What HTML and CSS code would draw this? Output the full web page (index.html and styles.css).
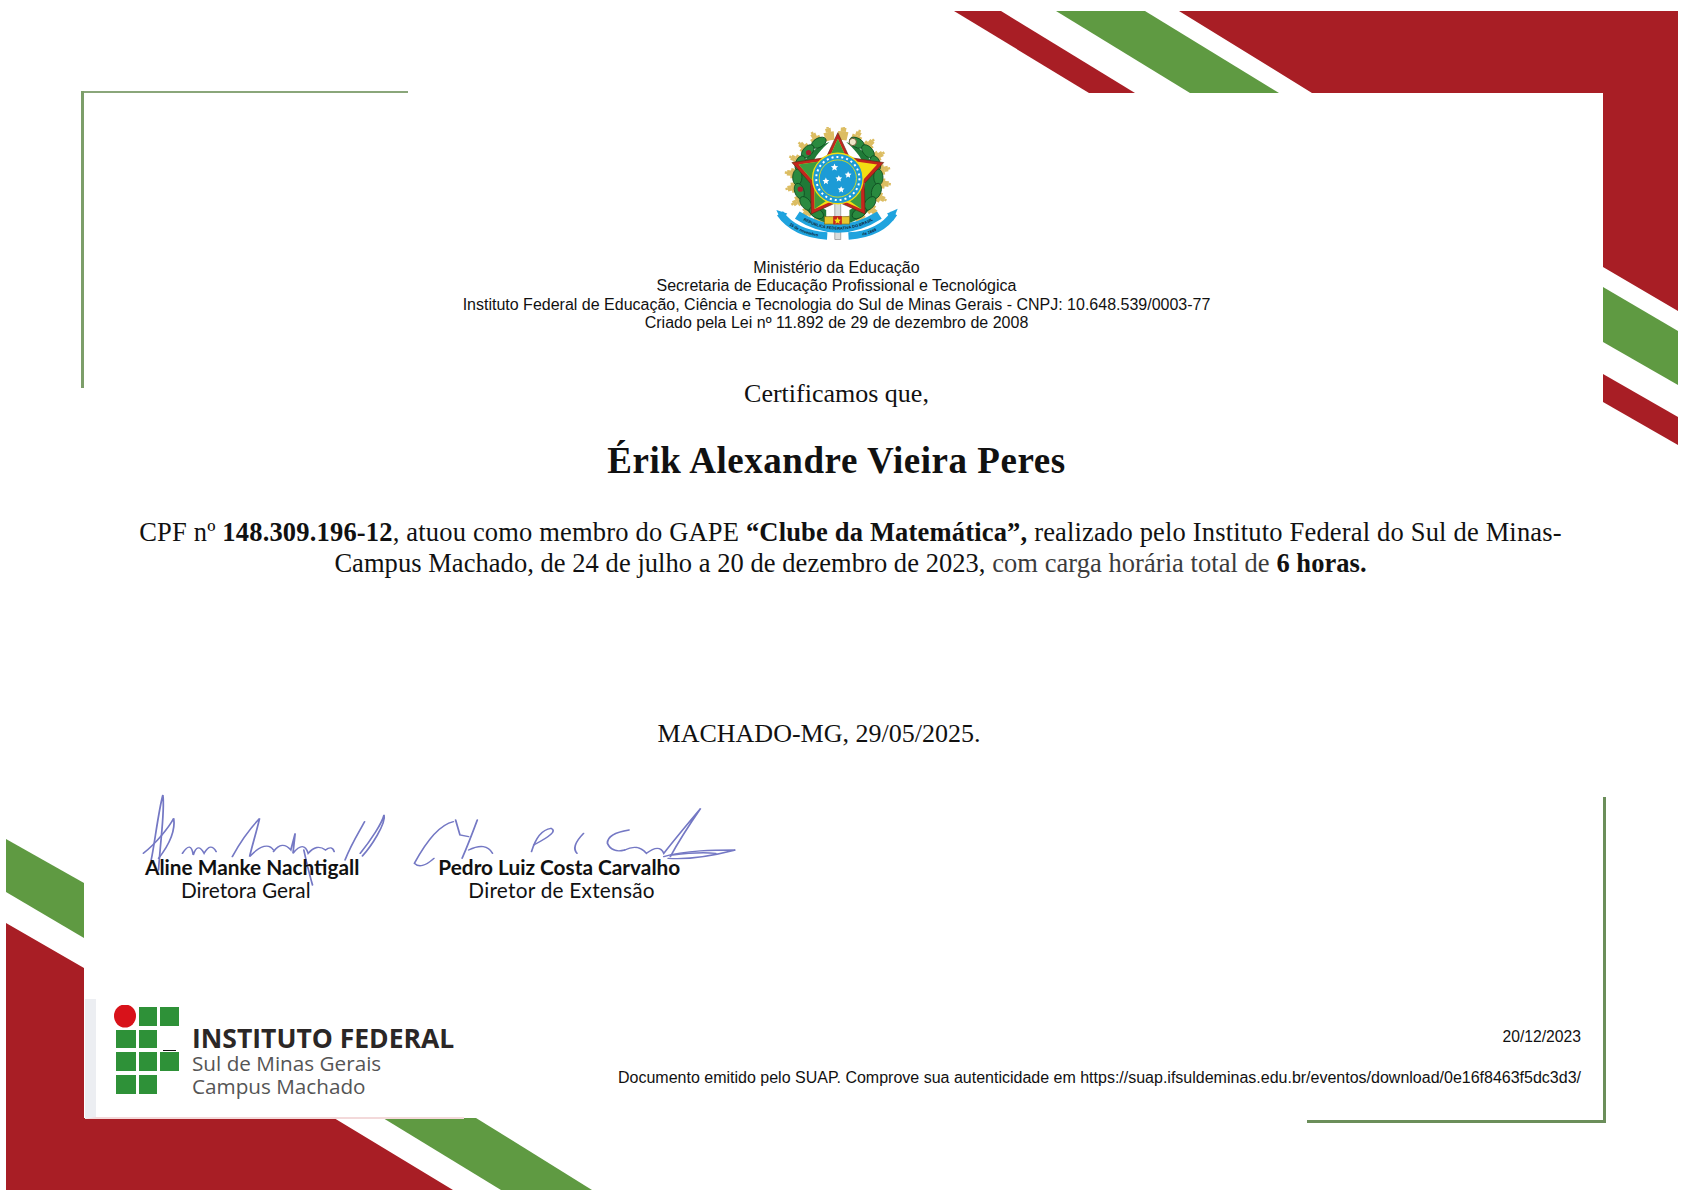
FILE: index.html
```html
<!DOCTYPE html>
<html lang="pt-BR">

<head>
    <meta charset="utf-8">
    <title>Certificado</title>
    <link rel="stylesheet" href="styles.css">
</head>

<body>
    <div class="Page">
        <svg class="Bands" width="1683" height="1190" viewBox="0 0 1683 1190">
            <g fill="#a81e25">
                <polygon points="954,11 1001,11 1135,93 1089,93"></polygon>
                <polygon points="1179,11 1678,11 1678,311 1603,267 1603,93 1312,93"></polygon>
                <polygon points="1603,374 1678,417 1678,445 1603,402"></polygon>
                <polygon points="6,923 84,968 84,1118 334,1118 453,1190 6,1190"></polygon>
            </g>
            <g fill="#5f9a42">
                <polygon points="1056,11 1145,11 1279,93 1190,93"></polygon>
                <polygon points="1603,287 1678,331 1678,385 1603,342"></polygon>
                <polygon points="6,839 84,883 84,938 6,892"></polygon>
                <polygon points="383,1118 476,1118 592,1190 501,1190"></polygon>
            </g>
            <g fill="#7c9e69">
                <rect x="81" y="91" width="327" height="2" fill="#8aa67a"></rect>
                <rect x="81" y="91" width="3" height="297"></rect>
                <rect x="1603" y="797" width="3" height="326" fill="#6b8e5a"></rect>
                <rect x="1307" y="1120" width="299" height="3" fill="#6b8e5a"></rect>
            </g>
        </svg>

        <div class="Content">
            <svg class="Seal" width="122" height="113" viewBox="225 80 365 340">
                <!-- rays -->
                <g fill="none" stroke="#dcbd62">
                    <circle cx="410" cy="235" r="130" stroke-width="26" pathLength="400" stroke-dasharray="14 6"></circle>
                    <circle cx="410" cy="235" r="148" stroke-width="12" pathLength="400" stroke-dasharray="7 13" stroke-dashoffset="-3.5"></circle>
                    <circle cx="410" cy="235" r="157" stroke-width="7" pathLength="400" stroke-dasharray="3 17" stroke-dashoffset="-5.5"></circle>
                </g>
                <!-- wreath -->
                <path d="M385,125 C315,145 275,220 300,300 C315,340 345,360 375,368 L375,330 C335,310 320,260 332,195 C342,165 362,145 385,125 Z" fill="#1f7a37"></path>
                <path d="M435,125 C505,145 545,220 520,300 C505,340 475,360 445,368 L445,330 C485,310 500,260 488,195 C478,165 458,145 435,125 Z" fill="#1f7a37"></path>
                <g fill="#2a8a3f" stroke="#0f4d22" stroke-width="2.5">
                    <ellipse cx="410" cy="113" rx="24" ry="14" transform="rotate(-28 410 235)"></ellipse>
                    <ellipse cx="410" cy="113" rx="24" ry="14" transform="rotate(-48 410 235)"></ellipse>
                    <ellipse cx="410" cy="113" rx="24" ry="14" transform="rotate(-68 410 235)"></ellipse>
                    <ellipse cx="410" cy="113" rx="24" ry="14" transform="rotate(-88 410 235)"></ellipse>
                    <ellipse cx="410" cy="113" rx="24" ry="14" transform="rotate(-108 410 235)"></ellipse>
                    <ellipse cx="410" cy="113" rx="24" ry="14" transform="rotate(-128 410 235)"></ellipse>
                    <ellipse cx="410" cy="113" rx="24" ry="14" transform="rotate(-148 410 235)"></ellipse>
                    <ellipse cx="410" cy="113" rx="24" ry="14" transform="rotate(28 410 235)"></ellipse>
                    <ellipse cx="410" cy="113" rx="24" ry="14" transform="rotate(48 410 235)"></ellipse>
                    <ellipse cx="410" cy="113" rx="24" ry="14" transform="rotate(68 410 235)"></ellipse>
                    <ellipse cx="410" cy="113" rx="24" ry="14" transform="rotate(88 410 235)"></ellipse>
                    <ellipse cx="410" cy="113" rx="24" ry="14" transform="rotate(108 410 235)"></ellipse>
                    <ellipse cx="410" cy="113" rx="24" ry="14" transform="rotate(128 410 235)"></ellipse>
                    <ellipse cx="410" cy="113" rx="24" ry="14" transform="rotate(148 410 235)"></ellipse>
                </g>
                <circle cx="322" cy="157" r="8" fill="#a3212c"></circle>
                <circle cx="297" cy="267" r="8" fill="#a3212c"></circle>
                <circle cx="455" cy="125" r="11" fill="#efe6c8" stroke="#6d5a33" stroke-width="3"></circle>
                <!-- sword -->
                <rect x="401" y="300" width="18" height="118" fill="#d8dcdc" stroke="#888" stroke-width="2"></rect>
                <!-- star -->
                <polygon points="410,97 445,172 548,187 490,250 492,342 410,305 330,342 328,250 272,187 375,172" fill="#c4251d" stroke="#5d2a14" stroke-width="2"></polygon>
                <polygon points="410,115 439,180 528,193 479,247 480,327 410,295 340,327 339,247 292,193 381,180" fill="#f3de12"></polygon>
                <polygon points="410,115 439,180 381,180" fill="#3d9c3f"></polygon>
                <polygon points="292,193 381,180 360,240 339,247" fill="#3d9c3f"></polygon>
                <polygon points="340,327 340,250 385,295" fill="#3d9c3f"></polygon>
                <polygon points="480,327 480,250 435,295" fill="#3d9c3f"></polygon>
                <!-- globe -->
                <circle cx="410" cy="235" r="76" fill="#1c9bd6" stroke="#f3de12" stroke-width="4"></circle>
                <circle cx="410" cy="235" r="65" fill="none" stroke="#fff" stroke-width="6" stroke-dasharray="6 9"></circle>
                <circle cx="410" cy="235" r="56" fill="#1c9bd6" stroke="#c9d92c" stroke-width="3"></circle>
                <g fill="#fff">
                    <polygon points="400,190 403,197 411,198 405,203 407,211 400,207 393,211 395,203 389,198 397,197"></polygon>
                    <polygon points="441,213 444,220 451,221 446,226 447,233 441,229 435,233 436,226 431,221 438,220"></polygon>
                    <polygon points="413,225 416,231 423,232 418,237 419,244 413,240 407,244 408,237 403,232 410,231"></polygon>
                    <polygon points="374,232 377,239 384,240 379,245 380,252 374,248 368,252 369,245 364,240 371,239"></polygon>
                    <polygon points="420,258 423,264 430,265 425,270 426,277 420,273 414,277 415,270 410,265 417,264"></polygon>
                </g>
                <!-- ribbon -->
                <path id="sealLeft" d="M236,340 Q280,402 378,408" fill="none" stroke="#1fa3de" stroke-width="22"></path>
                <path id="sealRight" d="M442,408 Q540,402 579,340" fill="none" stroke="#1fa3de" stroke-width="22"></path>
                <polygon points="225,330 258,340 240,362" fill="#1fa3de"></polygon>
                <polygon points="590,326 558,340 576,362" fill="#1fa3de"></polygon>
                <path id="sealBand" d="M288,345 Q410,425 535,345" fill="none" stroke="#1fa3de" stroke-width="26" stroke-linecap="butt"></path>
                <text class="SealText" dy="4"><textPath href="#sealBand" startOffset="50%" text-anchor="middle">REPUBLICA FEDERATIVA DO BRASIL</textPath></text>
                <text class="SealNote" dy="4"><textPath href="#sealLeft" startOffset="55%" text-anchor="middle">15 de novembro</textPath></text>
                <text class="SealNote" dy="4"><textPath href="#sealRight" startOffset="40%" text-anchor="middle">de 1889</textPath></text>
                <rect x="370" y="350" width="75" height="22" fill="#e7c72e" stroke="#7b6a1c" stroke-width="2"></rect>
                <rect x="396" y="348" width="26" height="25" fill="#c4251d"></rect>
                <polygon points="409,351 412,358 419,359 414,364 415,371 409,367 403,371 404,364 399,359 406,358" fill="#f3de12"></polygon>
            </svg>

            <div class="Gov">
                Ministério da Educação<br>
                Secretaria de Educação Profissional e Tecnológica<br>
                Instituto Federal de Educação, Ciência e Tecnologia do Sul de Minas Gerais - CNPJ: 10.648.539/0003-77<br>
                Criado pela Lei nº 11.892 de 29 de dezembro de 2008
            </div>

            <p class="Intro">Certificamos que,</p>
            <h1 class="Name">Érik Alexandre Vieira Peres</h1>
            <p class="Text">
                CPF nº <b>148.309.196-12</b>, atuou como membro do GAPE <b>“Clube da Matemática”,</b> realizado pelo Instituto Federal do Sul de Minas-<br>
                <span class="TextEnd">Campus Machado, de 24 de julho a 20 de dezembro de 2023, <span class="Soft">com carga horária total de</span> <b>6 horas.</b></span>
            </p>
            <p class="Place">MACHADO-MG, 29/05/2025.</p>

            <div class="Signers">
                <svg class="Scribble" width="680" height="170" viewBox="0 0 1568 510" preserveAspectRatio="none">
                    <g fill="none" stroke="#7478c4" stroke-width="4" stroke-linecap="round">
                        <path d="M118,270 C125,230 135,120 145,75 C150,120 140,200 135,300"></path>
                        <path d="M100,250 C130,220 160,170 170,145 C175,190 150,240 135,265"></path>
                        <path d="M190,250 Q210,210 215,255 Q225,215 240,250 Q255,215 268,245"></path>
                        <path d="M305,260 C330,200 350,170 368,145 C360,190 350,230 345,260 C370,225 390,220 400,240"></path>
                        <path d="M400,245 Q420,210 440,240 L450,190 L445,250 Q470,210 480,250 Q500,220 520,240 Q535,225 540,245"></path>
                        <path d="M470,240 Q480,300 490,345"></path>
                        <path d="M565,270 C580,220 600,180 610,155"></path>
                        <path d="M600,250 C625,210 650,160 655,135 C660,160 625,230 605,258"></path>
                        <path d="M815,155 C780,165 750,220 725,280 Q740,300 770,265"></path>
                        <path d="M820,150 L830,195 L850,200"></path>
                        <path d="M870,150 Q850,220 835,265"></path>
                        <path d="M850,240 Q890,215 905,250"></path>
                        <path d="M1040,175 Q1010,180 995,245"></path>
                        <path d="M1040,175 Q1060,185 1000,225"></path>
                        <path d="M1115,190 Q1085,230 1100,250"></path>
                        <path d="M1220,180 Q1170,190 1170,220 Q1180,250 1210,240"></path>
                        <path d="M1210,240 Q1240,220 1260,250 Q1290,220 1300,250 Q1330,200 1385,115 Q1340,200 1315,260"></path>
                        <path d="M1300,260 C1350,240 1420,240 1465,240 C1420,255 1360,270 1310,265"></path>
                        <path d="M1320,255 Q1380,245 1420,250"></path>
                    </g>
                </svg>
                <div class="Signer">
                    <div class="SignerName">Aline Manke Nachtigall</div>
                    <div class="SignerRole RoleA">Diretora Geral</div>
                </div>
                <div class="Signer">
                    <div class="SignerName">Pedro Luiz Costa Carvalho</div>
                    <div class="SignerRole RoleB">Diretor de Extensão</div>
                </div>
            </div>

            <div class="Footer">
                <div class="Logo">
                    <svg class="LogoMark" width="66" height="90" viewBox="0 0 66 90">
                        <ellipse cx="11" cy="11" rx="11" ry="11.5" fill="#d8121a"></ellipse>
                        <g fill="#2e9138">
                            <rect x="25" y="2" width="18" height="19"></rect>
                            <rect x="46" y="2" width="19" height="19"></rect>
                            <rect x="2" y="25" width="20" height="18"></rect>
                            <rect x="25" y="25" width="18" height="18"></rect>
                            <rect x="2" y="47" width="20" height="19"></rect>
                            <rect x="25" y="47" width="18" height="19"></rect>
                            <rect x="46" y="47" width="19" height="19"></rect>
                            <rect x="2" y="70" width="20" height="19"></rect>
                            <rect x="25" y="70" width="18" height="19"></rect>
                        </g>
                        <rect x="49" y="45" width="13" height="1" fill="#111"></rect>
                    </svg>
                    <div class="LogoText">
                        <div class="LogoTitle">INSTITUTO FEDERAL</div>
                        <div>Sul de Minas Gerais</div>
                        <div>Campus Machado</div>
                    </div>
                </div>
                <div class="Emission">
                    <div>20/12/2023</div>
                    <div class="EmissionLink">Documento emitido pelo SUAP. Comprove sua autenticidade em https://suap.ifsuldeminas.edu.br/eventos/download/0e16f8463f5dc3d3/</div>
                </div>
            </div>
        </div>
    </div>
</body>

</html>
```

FILE: styles.css
```css
body {
    margin: 0;
    background-color: white;
}

.Page {
    position: relative;
    width: 1683px;
    height: 1190px;
    overflow: hidden;
    background-color: white;
    color: #111;
}

.Bands {
    position: absolute;
    left: 0;
    top: 0;
}

.Content {
    position: relative;
    width: 1673px;
    padding-top: 127px;
    font-family: "Liberation Serif", serif;
}

.Seal {
    display: block;
    margin: 0 auto;
}

.SealText {
    font-family: "Liberation Sans", sans-serif;
    font-size: 12px;
    font-weight: bold;
    fill: #123;
}

.SealNote {
    font-family: "Liberation Sans", sans-serif;
    font-size: 12px;
    font-weight: bold;
    fill: #123;
}

.Gov {
    margin-top: 19px;
    font-family: "Liberation Sans", sans-serif;
    font-size: 16px;
    line-height: 18.4px;
    text-align: center;
}

.Intro {
    margin: 46px 0 0;
    font-size: 26px;
    line-height: 30px;
    text-align: center;
}

.Name {
    margin: 32px 0 0;
    font-size: 37px;
    letter-spacing: 0.55px;
    line-height: 40px;
    text-align: center;
}

.Text {
    margin: 36px 0 0 130px;
    width: 1441px;
    font-size: 26.5px;
    letter-spacing: 0.18px;
    line-height: 31px;
    text-align: center;
}

.TextEnd {
    letter-spacing: 0.05px;
}

.Soft {
    color: #3c3c3c;
}

.Place {
    margin: 140px 0 0;
    width: 1638px;
    font-size: 26px;
    line-height: 30px;
    text-align: center;
}

.Signers {
    position: relative;
    display: flex;
    gap: 79px;
    margin-top: 105px;
    padding-left: 145px;
}

.Scribble {
    position: absolute;
    left: 100px;
    top: -84px;
    filter: blur(0.4px);
}

.Signer {
    position: relative;
    font-family: Lato, sans-serif;
    font-size: 20.8px;
    line-height: 25px;
    white-space: nowrap;
}

.SignerName {
    font-weight: bold;
}

.SignerRole {
    margin-top: -2px;
}

.RoleA {
    margin-left: 36px;
}

.RoleB {
    margin-left: 30px;
    letter-spacing: 0.25px;
}

.Footer {
    display: flex;
    justify-content: space-between;
    margin-top: 97px;
    margin-left: 85px;
    width: 1496px;
}

.Logo {
    display: flex;
    box-sizing: border-box;
    width: 379px;
    height: 120px;
    padding: 6px 0 0 18px;
    background-color: white;
    border-left: 11px solid #eceef2;
    border-bottom: 2px solid #f3d9da;
}

.LogoMark {
    flex: none;
}

.LogoText {
    margin: 19px 0 0 12px;
    font-family: "Open Sans", sans-serif;
    font-size: 20.7px;
    line-height: 23px;
    color: #555;
}

.LogoTitle {
    font-size: 26.5px;
    font-weight: bold;
    line-height: 28px;
    color: #2b2726;
    white-space: nowrap;
}

.Emission {
    padding-top: 28px;
    font-family: "Liberation Sans", sans-serif;
    font-size: 15.7px;
    line-height: 20px;
    text-align: right;
}

.EmissionLink {
    margin-top: 21px;
    font-size: 16px;
    white-space: nowrap;
}
```
